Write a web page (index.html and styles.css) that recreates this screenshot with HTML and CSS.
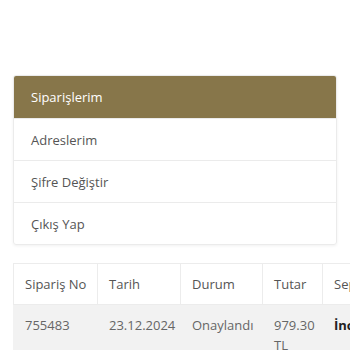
FILE: index.html
```html
<!DOCTYPE html>
<html lang="tr">
<head>
<meta charset="utf-8">
<link rel="stylesheet" href="styles.css">
</head>
<body>
<div class="page">
  <nav class="menu">
    <a class="menu-item active">Siparişlerim</a>
    <a class="menu-item">Adreslerim</a>
    <a class="menu-item">Şifre Değiştir</a>
    <a class="menu-item">Çıkış Yap</a>
  </nav>
  <div class="table-wrap">
    <table class="orders">
      <colgroup>
        <col class="c1"><col class="c2"><col class="c3"><col class="c4"><col class="c5">
      </colgroup>
      <thead>
        <tr><th>Sipariş No</th><th>Tarih</th><th>Durum</th><th>Tutar</th><th>Sepet</th></tr>
      </thead>
      <tbody>
        <tr><td>755483</td><td>23.12.2024</td><td>Onaylandı</td><td class="wrap">979.30 TL</td><td class="link">İncele</td></tr>
      </tbody>
    </table>
  </div>
</div>
</body>
</html>
```
FILE: styles.css
```css
* { box-sizing: border-box; }
html, body { margin: 0; padding: 0; background: #fff; }
body {
  font-family: "Open Sans", "Noto Sans", sans-serif;
  font-size: 13px;
  color: #555;
  overflow: hidden;
}
.page { padding: 75px 13px 0 13px; }
.menu {
  display: flex;
  flex-direction: column;
  border: 1px solid #ebebeb;
  border-radius: 3px;
  box-shadow: 0 1px 3px rgba(0,0,0,0.06);
  overflow: hidden;
}
.menu-item {
  display: block;
  padding: 11px 17px 10px;
  line-height: 20px;
  border-top: 1px solid #ebebeb;
  color: #555;
}
.menu-item:first-child { border-top: none; }
.menu-item.active {
  background: #87764a;
  color: #fff;
  padding-bottom: 11px;
}
.table-wrap { margin-top: 18px; width: 400px; }
.orders {
  border-collapse: collapse;
  table-layout: fixed;
  width: 390px;
}
.c1 { width: 84px; } .c2 { width: 83px; } .c3 { width: 82px; } .c4 { width: 60px; } .c5 { width: 81px; }
.orders th, .orders td {
  padding: 10px 11px;
  line-height: 20px;
  text-align: left;
  vertical-align: top;
  border: 1px solid #ececec;
  font-weight: 400;
  white-space: nowrap;
}
.orders th { color: #555; }
.orders tbody tr { background: #f2f2f2; }
.orders td { border-color: #f2f2f2; color: #666; }
.orders td.wrap { white-space: normal; }
.orders td.link { color: #222; font-weight: 700; }
```
